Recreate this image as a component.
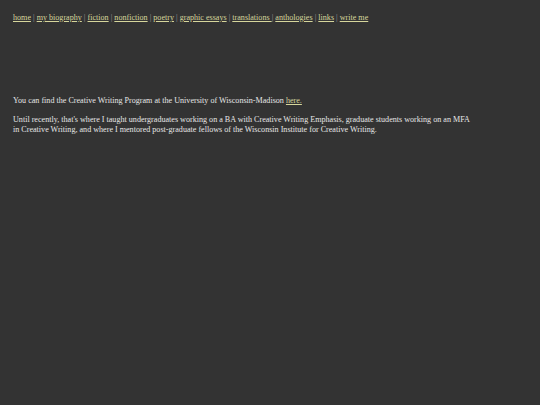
const links = [
  "home",
  "my biography",
  "fiction",
  "nonfiction",
  "poetry",
  "graphic essays",
  "translations ",
  "anthologies",
  "links",
  "write me",
];

export default function App() {
  return (
    <div className="min-h-[405px] bg-[#333333] px-[13px] pt-[13px] font-['Liberation_Serif',serif] text-[8.1px] leading-[10px] text-[#e6e6e6]">
      <nav className="text-[#9a9a9a]">
        {links.map((l, i) => (
          <span key={l}>
            <a href="#" className="text-[#d6d69c] underline">
              {l}
            </a>
            {i < links.length - 1 && " | "}
          </span>
        ))}
      </nav>

      <p className="mt-[73px]">
        You can find the Creative Writing Program at the University of Wisconsin-Madison{" "}
        <a href="#" className="text-[#d6d69c] underline">
          here.
        </a>
      </p>

      <p className="mt-[9px] max-w-[462px]">
        Until recently, that's where I taught undergraduates working on a BA with Creative Writing Emphasis, graduate
        students working on an MFA in Creative Writing, and where I mentored post-graduate fellows of the Wisconsin
        Institute for Creative Writing.
      </p>
    </div>
  );
}
